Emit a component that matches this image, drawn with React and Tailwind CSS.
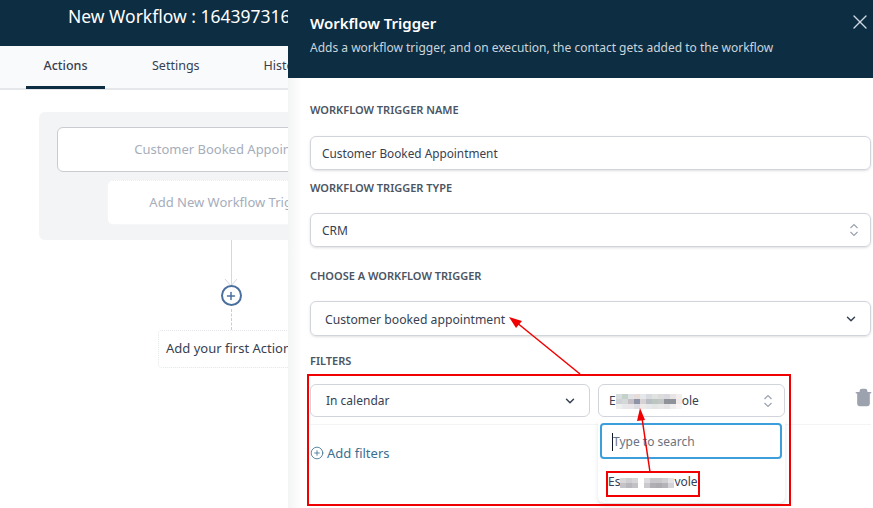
import React from "react";
import { ChevronDown, X, Trash2, CirclePlus, Plus } from "lucide-react";

const font = { fontFamily: '"Noto Sans","Open Sans",sans-serif' };

function Updown() {
  return (
    <svg width="10" height="16" viewBox="0 0 10 16" fill="none" stroke="#9ca3af" strokeWidth="1.2">
      <path d="M1.5 6 L5 2.5 L8.5 6" />
      <path d="M1.5 10 L5 13.5 L8.5 10" />
    </svg>
  );
}

function Mosaic({ colors }) {
  return (
    <span className="inline-flex flex-col align-middle">
      {colors.map((row, i) => (
        <span key={i} className="flex">
          {row.map((c, j) => (
            <span key={j} className="block h-[5px] w-[6px]" style={{ background: c }} />
          ))}
        </span>
      ))}
    </span>
  );
}

const m1 = [
  ["#d5dedb", "#c4d0ca", "#dfe3e6", "#e6dcd8", "#e4e8ea", "#d7dadf", "#e0e2e0", "#dcdcdc", "#d8d8de", "#e8e4e4", "#f2eeee"],
  ["#cfd3d8", "#d5d8d8", "#c5bfc3", "#8f93a8", "#d8d2d4", "#b8bec4", "#bcc6c0", "#c2c6c4", "#8f9298", "#90929a", "#f0eaea"],
  ["#eef0f0", "#e8e8ea", "#e8e6e8", "#dcdce2", "#eeeaea", "#e6e8ea", "#e4e6e6", "#e8e8e8", "#e4e4e6", "#eeeeee", "#f8f4f4"],
];
const m2 = [
  ["#d8d8da", "#cfcfd2", "#d6d6d9", "#ffffff", "#dcdcdf", "#c8c8cc", "#c8c8cc", "#d0d0d3", "#e4e4e6"],
  ["#c4c4c8", "#b8b8bc", "#c2c2c6", "#ffffff", "#cacace", "#b0b0b4", "#acacb0", "#b4b4b8", "#d4d4d8"],
];

export default function App() {
  return (
    <div className="relative h-[508px] w-[873px] overflow-hidden bg-white" style={font}>
      {/* Page behind the drawer */}
      <header className="h-[46px] bg-[#0d2d42] pl-[68px] pt-[3px] text-[17.5px] leading-[26px] text-white whitespace-nowrap">
        New Workflow : 1643973165
      </header>
      <nav className="flex h-[44px] border-b-2 border-[#e5e7eb] bg-[#f9fafb] pl-[26px] text-[12.5px] text-[#374151]">
        <div className="flex h-[43px] w-[79px] items-center justify-center border-b-[3px] border-[#0d2d42] font-medium">Actions</div>
        <div className="ml-[47px] flex h-[41px] items-center">Settings</div>
        <div className="ml-[64px] flex h-[41px] items-center">History</div>
      </nav>

      <main className="flex w-[462px] flex-col items-center pt-[22px]">
        <section className="flex h-[128px] w-[384px] flex-col items-center rounded-md bg-[#f3f4f6] pt-[15px]">
          <div className="flex h-[45px] w-[348px] items-center justify-center rounded-md border border-[#c9cbd0] bg-white text-[13px] text-[#a6adbb]">
            Customer Booked Appointment
          </div>
          <div className="mt-[8px] flex h-[45px] w-[248px] items-center justify-center rounded-md border border-dotted border-[#eceef1] bg-white pt-[1px] text-[13px] text-[#a6adbb]">
            Add New Workflow Trigger
          </div>
        </section>
        <div className="h-[46px] w-px bg-[#d4d8de]" />
        <div className="relative z-10 -mt-[1px] flex h-[21px] w-[21px] items-center justify-center rounded-full border-2 border-[#4a6f9c] bg-white">
          <Plus size={12} strokeWidth={3} color="#4a6f9c" />
        </div>
        <div className="mt-[3px] h-[21px] border-l border-dashed border-[#c9ccd1]" />
        <div className="flex h-[38px] w-[146px] items-center whitespace-nowrap rounded border border-dotted border-[#e3e5e8] bg-white pl-[7px] text-[13px] text-[#374151]">
          Add your first Action
        </div>
      </main>

      {/* Arrowhead of connector */}
      <svg className="absolute left-[224px] top-[276px]" width="14" height="12" fill="none" stroke="#d4d8de" strokeWidth="1">
        <path d="M1 3 L7 10 L13 3" />
      </svg>

      {/* Drawer */}
      <aside className="absolute right-0 top-0 flex h-[508px] w-[585px] flex-col bg-white">
        <div className="absolute bottom-0 left-0 top-[78px] w-[14px] bg-gradient-to-r from-[#f3f4f4] to-white" />
        <div className="relative h-[78px] bg-[#0d2d42] px-[22px] pt-[12px]">
          <h2 className="text-[15px] font-semibold leading-[22px] text-white">Workflow Trigger</h2>
          <p className="mt-[5px] text-[12px] leading-[18px] text-[#cbd5dc]">
            Adds a workflow trigger, and on execution, the contact gets added to the workflow
          </p>
          <X className="absolute right-[1px] top-[10px]" size={24} strokeWidth={1.4} color="#cfd8e3" />
        </div>

        <div className="relative flex flex-col pl-[22px] pr-[2px]">
          <label className="mt-[24px] text-[11px] font-semibold uppercase leading-[16px] text-[#4b5563]">Workflow Trigger Name</label>
          <div className="mt-[18px] flex h-[34px] items-center rounded-md border border-[#d1d5db] pl-[11px] pt-[2px] text-[11.8px] text-[#374151] shadow-sm">
            Customer Booked Appointment
          </div>

          <label className="mt-[10px] text-[11px] font-semibold uppercase leading-[16px] text-[#4b5563]">Workflow Trigger Type</label>
          <div className="mt-[17px] flex h-[34px] items-center justify-between rounded-md border border-[#d1d5db] pl-[11px] pr-[11px] text-[12px] text-[#374151] shadow-sm">
            <span className="pt-[2px]">CRM</span>
            <Updown />
          </div>

          <label className="mt-[21px] text-[11px] font-semibold uppercase leading-[16px] text-[#4b5563]">Choose a workflow trigger</label>
          <div className="mt-[17px] flex h-[35px] items-center justify-between rounded-md border border-[#d1d5db] pl-[14px] pr-[12px] text-[12.2px] text-[#374151] shadow-sm">
            <span className="pt-[3px]">Customer booked appointment</span>
            <ChevronDown size={14} strokeWidth={2.5} color="#374151" />
          </div>

          <label className="mt-[17px] text-[11px] font-semibold uppercase leading-[16px] text-[#4b5563]">Filters</label>
          <div className="mt-[15px] flex items-start border-b border-[#f3f4f6] pb-[7px]">
            <div className="flex h-[33px] w-[280px] shrink-0 items-center justify-between rounded-md border border-[#d1d5db] pl-[15px] pr-[12px] text-[12px] text-[#374151]">
              In calendar
              <ChevronDown size={14} strokeWidth={2.5} color="#374151" />
            </div>
            <div className="ml-[8px] flex h-[33px] w-[187px] shrink-0 items-center justify-between rounded-md border border-[#d1d5db] pl-[10px] pr-[11px] text-[12px] text-[#374151]">
              <span>
                E<Mosaic colors={m1} />ole
              </span>
              <Updown />
            </div>
            <Trash2 className="ml-[69px] mt-[4px] shrink-0" size={19} fill="#9ca3af" color="#9ca3af" />
          </div>

          <div className="mt-[19px] flex items-center gap-[3px] text-[13px] leading-[18px] text-[#3b6f8f]">
            <CirclePlus size={14} strokeWidth={1.4} />
            Add filters
          </div>

          {/* Dropdown panel */}
          <div className="absolute left-[310px] top-[340px] h-[85px] w-[187px] rounded-b-md bg-white px-[2px] pt-[5px] shadow-md">
            <div className="flex h-[36px] w-[182px] items-center rounded border-2 border-[#3c9fdc] pl-[10px] pt-[1px] text-[12px] text-[#6b7280]">
              <span className="h-[18px] w-px bg-[#111827]" />
              Type to search
            </div>
            <div className="mt-[14px] pl-[8px] text-[12px] leading-[18px] text-[#374151]">
              Es<Mosaic colors={m2} />vole
            </div>
          </div>
        </div>
      </aside>

      {/* Annotations */}
      <div className="pointer-events-none absolute left-[307px] top-[374px] h-[132px] w-[484px] border-2 border-[#f00000]" />
      <div className="pointer-events-none absolute left-[606px] top-[471px] h-[26px] w-[94px] border-2 border-[#f00000]" />
      <svg className="pointer-events-none absolute left-0 top-0" width="873" height="508" fill="none">
        <path d="M580 374 L516 322" stroke="#f00000" strokeWidth="1.5" />
        <path d="M509 317 L522 321 L516 328 Z" fill="#f00000" />
        <path d="M650 472 L642 418" stroke="#f00000" strokeWidth="1.5" />
        <path d="M640 408 L645 420 L637 421 Z" fill="#f00000" />
      </svg>
    </div>
  );
}
